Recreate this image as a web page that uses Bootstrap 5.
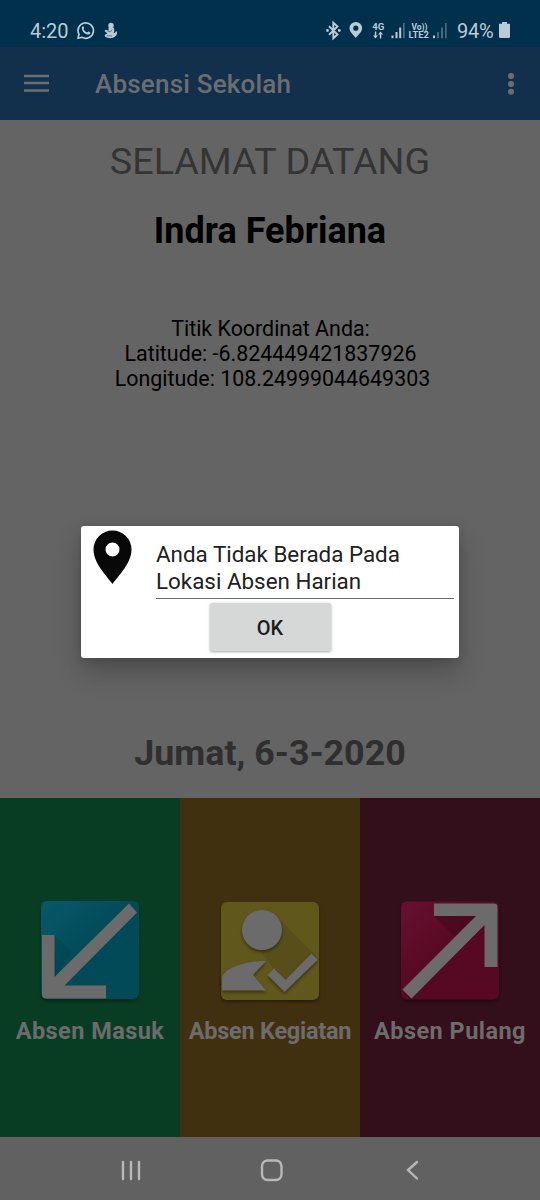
<!DOCTYPE html>
<html lang="id">
<head>
<meta charset="utf-8">
<meta name="viewport" content="width=device-width, initial-scale=1">
<title>Absensi Sekolah</title>
<link href="https://cdn.jsdelivr.net/npm/bootstrap@5.3.0/dist/css/bootstrap.min.css" rel="stylesheet">
<style>
  body { font-family: Roboto, "Noto Sans", sans-serif; background: #646464; color: #000; line-height: 1.2; }
  svg { display: block; flex: none; }
  .screen { width: 540px; height: 1200px; overflow: hidden; }
  .statusbar { height: 47px; background: #00304c; color: #b9cbd6; padding: 15px 29px 0 30px; font-size: 20px; }
  .statusbar span { line-height: 32px; }
  .clock { width: 38px; }
  .level { width: 37px; margin-right: 4px; letter-spacing: -.3px; }
  .appbar { height: 73px; background: #12304c; color: #6b6e70; padding: 0 22px 0 24px; }
  .appbar h1 { font-size: 26px; font-weight: 500; margin-left: 46px; letter-spacing: .2px; padding-top: 2px; }
  .welcome { font-size: 37.7px; line-height: 46px; margin-top: 18px; color: #343434; }
  .person { font-size: 36px; line-height: 44px; margin-top: 25px; font-weight: 700; }
  .coords { font-size: 21.4px; line-height: 25px; margin-top: 63px; padding-left: 1px; }
  .today { font-size: 35.8px; line-height: 44px; margin-bottom: 23px; font-weight: 700; color: #2f2f2f; }
  .tiles { height: 339px; }
  .tile { width: 180px; padding-top: 99px; color: #6c6c6c; font-size: 23.5px; font-weight: 700; white-space: nowrap; }
  .tile div { line-height: 28px; margin-top: 4px; }
  .masuk { background: #093d23; letter-spacing: .45px; }
  .kegiatan { background: #41300f; letter-spacing: -.25px; }
  .pulang { background: #320f1a; letter-spacing: .45px; }
  .navkeys { height: 63px; background: #616161; }
  .dialog-box { left: 81px; top: 526px; width: 378px; height: 132px; background: #fff; border-radius: 3px; box-shadow: 0 14px 26px rgba(0,0,0,.22), 0 2px 8px rgba(0,0,0,.12); }
  .dialog-box p { width: 298px; margin: 15px 0 0 24px; height: 58px; border-bottom: 1px solid #6c6c6c; color: #212121; font-size: 22.4px; line-height: 26.5px; }
  .pin { margin: 4px 0 0 12px; }
  .ok-btn { width: 121px; height: 48px; margin-top: 4px; padding: 1px 0 0; background: #d6d7d7; border-radius: 2px; color: #1c1c1c; font-size: 20px; font-weight: 500; box-shadow: 0 1px 3px rgba(0,0,0,.35); border: 0; }
</style>
</head>
<body>
<main class="screen position-relative d-flex flex-column">
  <div class="statusbar d-flex">
    <span class="clock">4:20</span>
    <svg width="56" height="32" viewBox="68 15 56 32" fill="none" stroke="#b9cbd6">
      <path d="M78 38.300l1-4a7.700 7.700 0 1 1 3 3z" stroke-width="1.700" stroke-linejoin="round"/>
      <path d="M82 27c1-1.200 1.700-.7 2.100.7.3 1-.9 1.100-.3 2.100.8 1.300 1.700 2 3 2.500 1 .3 1.100-1 1.900-.7l1.600.9c.3 1.600-1.400 2.300-2.900 2-3.600-.8-6-4-5.400-7.500z" fill="#b9cbd6" stroke="none"/>
      <g fill="#b9cbd6" stroke="none"><circle cx="111" cy="25.500" r="2.700"/><path d="M108.500 27.500h5c1 1.500 1 3.500.2 5.500 1.200.2 2-.5 1.700-1.500h1.700c.4 3-1.300 5.300-4.100 6.300-2.700.7-5.600.4-7.900-1-1.100-1.400.3-2.800 2.400-3.200l-3-2.600 1.200-1.300 2.800 1z"/></g>
      <path d="M107.500 31l3 .8 1.500-2.300M107 35.600l5 .5" stroke="#40637a" stroke-width=".8"/>
    </svg>
    <svg class="ms-auto" width="132" height="32" viewBox="325 15 132 32" fill="none" stroke="#b9cbd6">
      <path d="M329 26.300l8.500 8.200-4.200 3.800V22.700l4.200 3.800-8.500 8.200" stroke-width="1.900"/>
      <g fill="#b9cbd6" stroke="none"><circle cx="327.500" cy="30.500" r="1.400"/><circle cx="339.300" cy="30.500" r="1.400"/>
      <path fill-rule="evenodd" d="M355.800 38c-2.300-3-6.300-6-6.300-9.700a6.300 6.300 0 0 1 12.600 0c0 3.700-4 6.700-6.300 9.700zm0-12.400a2.600 2.600 0 1 0 0 5.200 2.600 2.600 0 0 0 0-5.200z"/>
      <path d="M374.800 31.500h1.500v4h1.700l-2.500 3-2.500-3h1.800zM379.800 38.500h1.500v-4h1.800l-2.600-3-2.500 3h1.800z"/>
      <rect x="391.500" y="35.500" width="2" height="2.700"/><rect x="395.500" y="32" width="2" height="6.200"/><rect x="399.200" y="27.500" width="2" height="10.700"/>
      <rect x="403" y="23" width="1.700" height="15.200" opacity=".4"/>
      <rect x="433" y="35.500" width="2" height="2.700"/><g opacity=".38"><rect x="437" y="32" width="2" height="6.200"/><rect x="441" y="27.500" width="2" height="10.700"/><rect x="445" y="23" width="1.700" height="15.200"/></g>
      <g font-family="Roboto, sans-serif" font-weight="700"><text x="372.300" y="29.500" font-size="9.500" textLength="12" lengthAdjust="spacingAndGlyphs">4G</text><text x="411.500" y="29.500" font-size="9.500" textLength="16" lengthAdjust="spacingAndGlyphs">Vo))</text><text x="408.500" y="38.200" font-size="9.500" textLength="20.500" lengthAdjust="spacingAndGlyphs">LTE2</text></g></g>
    </svg>
    <span class="level">94%</span>
    <svg width="13" height="32" viewBox="498 15 13 32" fill="#b9cbd6"><path d="M502 22h5v1.800h3V36.500q0 1.500-1.500 1.500h-8q-1.500 0-1.500-1.500V23.800h3z"/></svg>
  </div>
  <header class="appbar d-flex align-items-center">
    <svg width="25" height="20" viewBox="0 0 25 20" stroke="#6b6e70" stroke-width="2.300"><path d="M0 2h25M0 9h25M0 16.500h25"/></svg>
    <h1 class="mb-0">Absensi Sekolah</h1>
    <svg class="ms-auto" width="14" height="24" viewBox="0 0 14 24" fill="#6b6e70"><circle cx="7" cy="4" r="3"/><circle cx="7" cy="12" r="3"/><circle cx="7" cy="19.700" r="3"/></svg>
  </header>
  <section class="text-center d-flex flex-column flex-grow-1">
    <div class="welcome">SELAMAT DATANG</div>
    <div class="person">Indra Febriana</div>
    <div class="coords">Titik Koordinat Anda:<br>Latitude: -6.824449421837926<br><span class="ms-1">Longitude: 108.24999044649303</span></div>
    <div class="today mt-auto">Jumat, 6-3-2020</div>
  </section>
  <section class="tiles d-flex text-center">
    <div class="tile masuk d-flex flex-column align-items-center">
      <svg width="110" height="116" viewBox="35 897 110 116">
        <defs><linearGradient id="teal" x2="1" y2="1"><stop stop-color="#07586a"/><stop offset=".5" stop-color="#024a57"/><stop offset="1" stop-color="#024a57"/></linearGradient><filter id="sh" x="-10%" y="-10%" width="120%" height="125%" color-interpolation-filters="sRGB"><feDropShadow dx="0" dy="2" stdDeviation="1.500" flood-opacity=".4"/></filter></defs>
        <rect x="41" y="901" width="98" height="98" rx="6" fill="url(#teal)" filter="url(#sh)"/>
        <path d="M54 935l18 17-17 25z" fill="#003f49" opacity=".35"/>
        <path d="M42 935h12.500v42L129 903.500l8 9L64.500 985.500H106V998.500H46q-4 0-4-4z" fill="#6b6b6b"/>
      </svg>
      <div>Absen Masuk</div>
    </div>
    <div class="tile kegiatan d-flex flex-column align-items-center">
      <svg width="110" height="116" viewBox="215 897 110 116">
        <rect x="221" y="902" width="98" height="98" rx="6" fill="#60571b" filter="url(#sh)"/>
        <path d="M278 918l38 38-30 30-25-34z" fill="#4d4618" opacity=".5"/>
        <g fill="#6b6b6b" filter="url(#sh)"><circle cx="262" cy="930" r="20"/><path d="M222 990.500V977c5-10 24-16 44-16l-13 14 13 15.500zM267.500 975l6.500-6.500 11.500 11.500 26-26.500 6 6.500-33 32z"/></g>
      </svg>
      <div>Absen Kegiatan</div>
    </div>
    <div class="tile pulang d-flex flex-column align-items-center">
      <svg width="110" height="116" viewBox="395 897 110 116">
        <defs><linearGradient id="rose" x2="1" y2="1"><stop stop-color="#66102f"/><stop offset=".5" stop-color="#570923"/><stop offset="1" stop-color="#570923"/></linearGradient></defs>
        <rect x="401" y="901.500" width="98" height="98" rx="6" fill="url(#rose)" filter="url(#sh)"/>
        <path d="M434 916l20 20 24-21z" fill="#3d0719" opacity=".5"/>
        <path d="M434 903.500h60q3.500 0 3.500 3.500v60H484.500V925L411.500 998.500l-9-9L476 916H434z" fill="#6b6b6b"/>
      </svg>
      <div>Absen Pulang</div>
    </div>
  </section>
  <nav class="navkeys">
    <svg width="540" height="63" viewBox="0 1137 540 63" fill="none" stroke="#b8b8b8" stroke-width="2.400" stroke-linecap="round">
      <path d="M123 1162v17M131 1162v17M139 1162v17"/><rect x="262" y="1160.500" width="19.500" height="19.500" rx="5.500"/><path d="M417 1162l-9 8 9 8.500"/>
    </svg>
  </nav>
  <div class="dialog-box position-absolute" role="dialog">
    <div class="d-flex">
      <svg class="pin" width="39" height="56" viewBox="0 0 39 56"><path fill="#080808" fill-rule="evenodd" d="M19.500 54C13 45 .5 33 .5 19.500a19 19 0 0 1 38 0C38.500 33 26 45 19.500 54zm0-41.500a7 7 0 1 0 0 14 7 7 0 0 0 0-14z"/></svg>
      <p>Anda Tidak Berada Pada Lokasi Absen Harian</p>
    </div>
    <button class="ok-btn btn d-block mx-auto">OK</button>
  </div>
</main>
<script src="https://cdn.jsdelivr.net/npm/bootstrap@5.3.0/dist/js/bootstrap.bundle.min.js"></script>
</body>
</html>
